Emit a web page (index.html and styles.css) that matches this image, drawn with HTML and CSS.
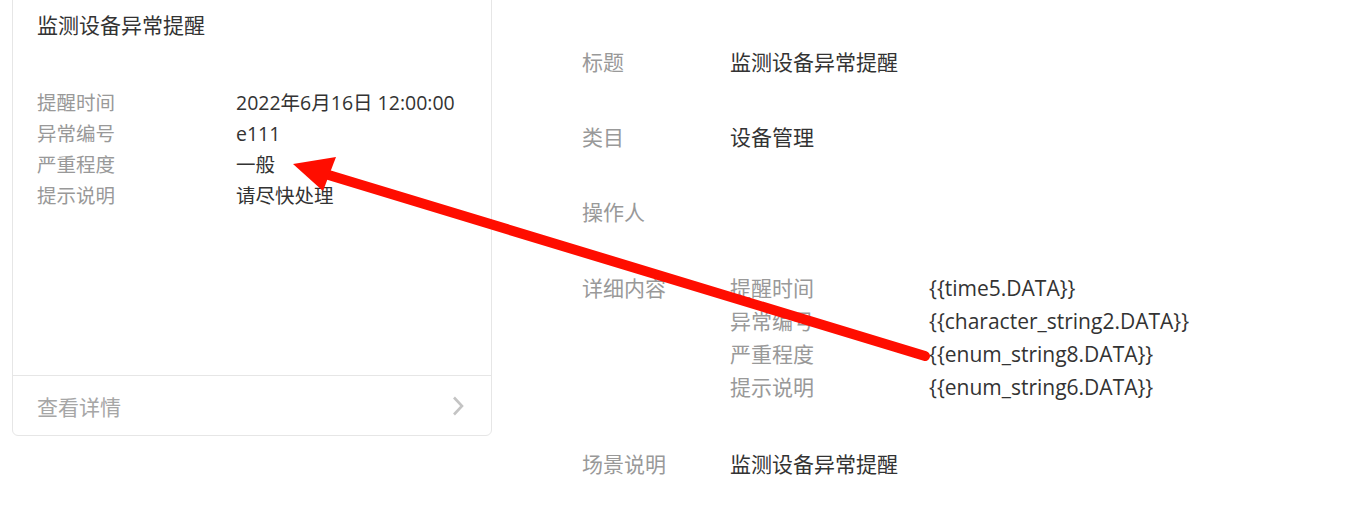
FILE: index.html
```html
<!DOCTYPE html>
<html>
<head>
    <title>消息模板预览</title>
    <link rel="stylesheet" href="styles.css">
</head>
<body>
    <div class="page">
        <div class="card">
            <div class="card-title">监测设备异常提醒</div>
            <div class="card-body">
                <div class="info-row"><span class="info-label">提醒时间</span><span class="info-value">2022年6月16日 12:00:00</span></div>
                <div class="info-row"><span class="info-label">异常编号</span><span class="info-value">e111</span></div>
                <div class="info-row"><span class="info-label">严重程度</span><span class="info-value">一般</span></div>
                <div class="info-row"><span class="info-label">提示说明</span><span class="info-value">请尽快处理</span></div>
            </div>
            <div class="card-footer">
                <span>查看详情</span>
                <svg class="chevron" width="14" height="22" viewBox="0 0 14 22">
                    <path d="M3 2.5 L11 11 L3 19.5" fill="none" stroke="#c4c4c4" stroke-width="2.6"/>
                </svg>
            </div>
        </div>

        <div class="details">
            <div class="row">
                <div class="row-label">标题</div>
                <div class="row-value">监测设备异常提醒</div>
            </div>
            <div class="row">
                <div class="row-label">类目</div>
                <div class="row-value">设备管理</div>
            </div>
            <div class="row">
                <div class="row-label">操作人</div>
                <div class="row-value"></div>
            </div>
            <div class="row row-detail">
                <div class="row-label">详细内容</div>
                <div class="sub-list">
                    <div class="sub-row"><span class="sub-label">提醒时间</span><span class="row-value">{{time5.DATA}}</span></div>
                    <div class="sub-row"><span class="sub-label">异常编号</span><span class="row-value">{{character_string2.DATA}}</span></div>
                    <div class="sub-row"><span class="sub-label">严重程度</span><span class="row-value">{{enum_string8.DATA}}</span></div>
                    <div class="sub-row"><span class="sub-label">提示说明</span><span class="row-value">{{enum_string6.DATA}}</span></div>
                </div>
            </div>
            <div class="row">
                <div class="row-label">场景说明</div>
                <div class="row-value">监测设备异常提醒</div>
            </div>
        </div>
    </div>

    <!-- annotation arrow drawn over the screenshot -->
    <svg class="arrow" width="1346" height="518" viewBox="0 0 1346 518">
        <line x1="925" y1="356" x2="322" y2="173" stroke="#ff0d00" stroke-width="10" stroke-linecap="round"/>
        <polygon points="293,164 336,157 323,191" fill="#ff0d00"/>
    </svg>
</body>
</html>
```

FILE: styles.css
```css
body {
    margin: 0;
    padding: 0;
    background-color: #ffffff;
    font-family: "Open Sans", "Noto Sans CJK SC", sans-serif;
    color: #333333;
    overflow: hidden;
}

.page {
    display: flex;
    padding-left: 12px;
    gap: 90px;
}

.card {
    width: 478px;
    height: 446px;
    margin-top: -12px;
    border: 1px solid #e6e6e6;
    border-radius: 6px;
    display: flex;
    flex-direction: column;
}

.card-title {
    padding: 21px 24px 0;
    font-size: 21px;
    line-height: 30px;
}

.card-body {
    padding: 47px 24px 0;
}

.info-row {
    display: flex;
    font-size: 19.5px;
    line-height: 31px;
}

.info-label {
    width: 199px;
    color: #999999;
}

.card-footer {
    margin-top: auto;
    height: 59px;
    border-top: 1px solid #e6e6e6;
    padding: 0 24px;
    display: flex;
    align-items: center;
    justify-content: space-between;
    font-size: 21px;
    color: #a6a6a6;
}

.chevron {
    margin-right: 2px;
}

.details {
    padding-top: 47px;
    display: flex;
    flex-direction: column;
    gap: 45px;
}

.row {
    display: flex;
    font-size: 21px;
    line-height: 30px;
}

.row-label {
    width: 148px;
    color: #999999;
}

.row-value {
    color: #333333;
}

.row-detail {
    line-height: 33px;
}

.sub-row {
    display: flex;
}

.sub-label {
    width: 199px;
    color: #999999;
}

.arrow {
    position: absolute;
    top: 0;
    left: 0;
    pointer-events: none;
}
```
